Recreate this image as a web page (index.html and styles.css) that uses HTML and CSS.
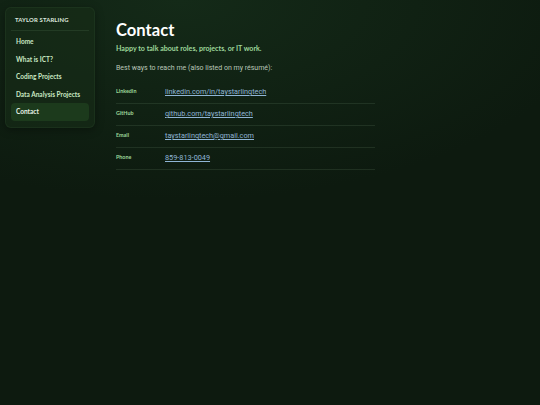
FILE: index.html
```html
<!DOCTYPE html>
<html lang="en">
<head>
<meta charset="utf-8">
<title>Contact</title>
<link rel="stylesheet" href="styles.css">
</head>
<body>
<div class="layout">
  <aside class="sidebar">
    <div class="brand">TAYLOR STARLING</div>
    <nav class="nav">
      <a class="nav-item" href="#">Home</a>
      <a class="nav-item" href="#">What is ICT?</a>
      <a class="nav-item" href="#">Coding Projects</a>
      <a class="nav-item" href="#">Data Analysis Projects</a>
      <a class="nav-item active" href="#">Contact</a>
    </nav>
  </aside>
  <main class="main">
    <h1 class="title">Contact</h1>
    <p class="subtitle">Happy to talk about roles, projects, or IT work.</p>
    <p class="intro">Best ways to reach me (also listed on my résumé):</p>
    <div class="rows">
      <div class="row"><span class="label">LinkedIn</span><a class="value" href="#">linkedin.com/in/taystarlingtech</a></div>
      <div class="row"><span class="label">GitHub</span><a class="value" href="#">github.com/taystarlingtech</a></div>
      <div class="row"><span class="label">Email</span><a class="value" href="#">taystarlingtech@gmail.com</a></div>
      <div class="row"><span class="label">Phone</span><a class="value" href="#">859-813-0049</a></div>
    </div>
  </main>
</div>
</body>
</html>
```

FILE: styles.css
```css
* { box-sizing: border-box; }
html, body { height: 100%; }
body {
  margin: 0;
  background: #0d1a0f;
  background-image: radial-gradient(ellipse 420px 200px at 180px 0px, #142a18 0%, rgba(13,26,15,0) 100%);
  color: #dfe8df;
  font-family: "Lato", "DejaVu Sans", sans-serif;
}
.layout {
  display: flex;
  align-items: flex-start;
  padding: 7px 0 0 5px;
  gap: 21px;
}
.sidebar {
  width: 90px;
  background: rgba(24, 46, 24, 0.55);
  border: 1px solid rgba(120, 170, 120, 0.08);
  border-radius: 6px;
  padding: 8px 5px 6px 5px;
  box-shadow: 0 2px 8px rgba(0,0,0,0.35);
}
.brand {
  font-size: 5.9px;
  font-weight: 700;
  letter-spacing: 0.15px;
  color: #dfe8df;
  padding: 0 4px 6px 4px;
  margin: 0 0 2px 0;
  border-bottom: 1px solid rgba(140, 190, 140, 0.12);
  line-height: 8px;
}
.nav { display: flex; flex-direction: column; gap: 0; }
.nav-item {
  display: block;
  font-size: 6.5px;
  font-weight: 700;
  color: #c9e7c2;
  text-decoration: none;
  padding: 5px 5px;
  line-height: 7.6px;
  border-radius: 4px;
}
.nav-item.active {
  background: #1c3a1c;
  color: #e8f3e6;
}
.main {
  width: 259px;
  padding-top: 13px;
}
.title {
  margin: 0;
  font-size: 16.6px;
  font-weight: 700;
  color: #ffffff;
  line-height: 20px;
}
.subtitle {
  margin: 4px 0 0 0;
  font-size: 7.1px;
  font-weight: 700;
  color: #9ed89a;
  line-height: 9px;
}
.intro {
  margin: 11px 0 0 0;
  font-family: "Roboto", "Liberation Sans", sans-serif;
  font-size: 7px;
  color: #b9c6b7;
  line-height: 9px;
}
.rows { margin-top: 9px; }
.row {
  display: flex;
  align-items: flex-start;
  height: 22px;
  padding-top: 5px;
  border-bottom: 1px solid rgba(140, 180, 140, 0.14);
}
.label {
  width: 49px;
  font-size: 5.4px;
  font-weight: 700;
  color: #9ed89a;
  line-height: 8px;
}
.value {
  font-family: "Roboto", "Liberation Sans", sans-serif;
  font-size: 7.3px;
  color: #8fb5d6;
  line-height: 10px;
  text-decoration: underline;
  text-decoration-thickness: 0.6px;
  text-underline-offset: 1.2px;
}
```
